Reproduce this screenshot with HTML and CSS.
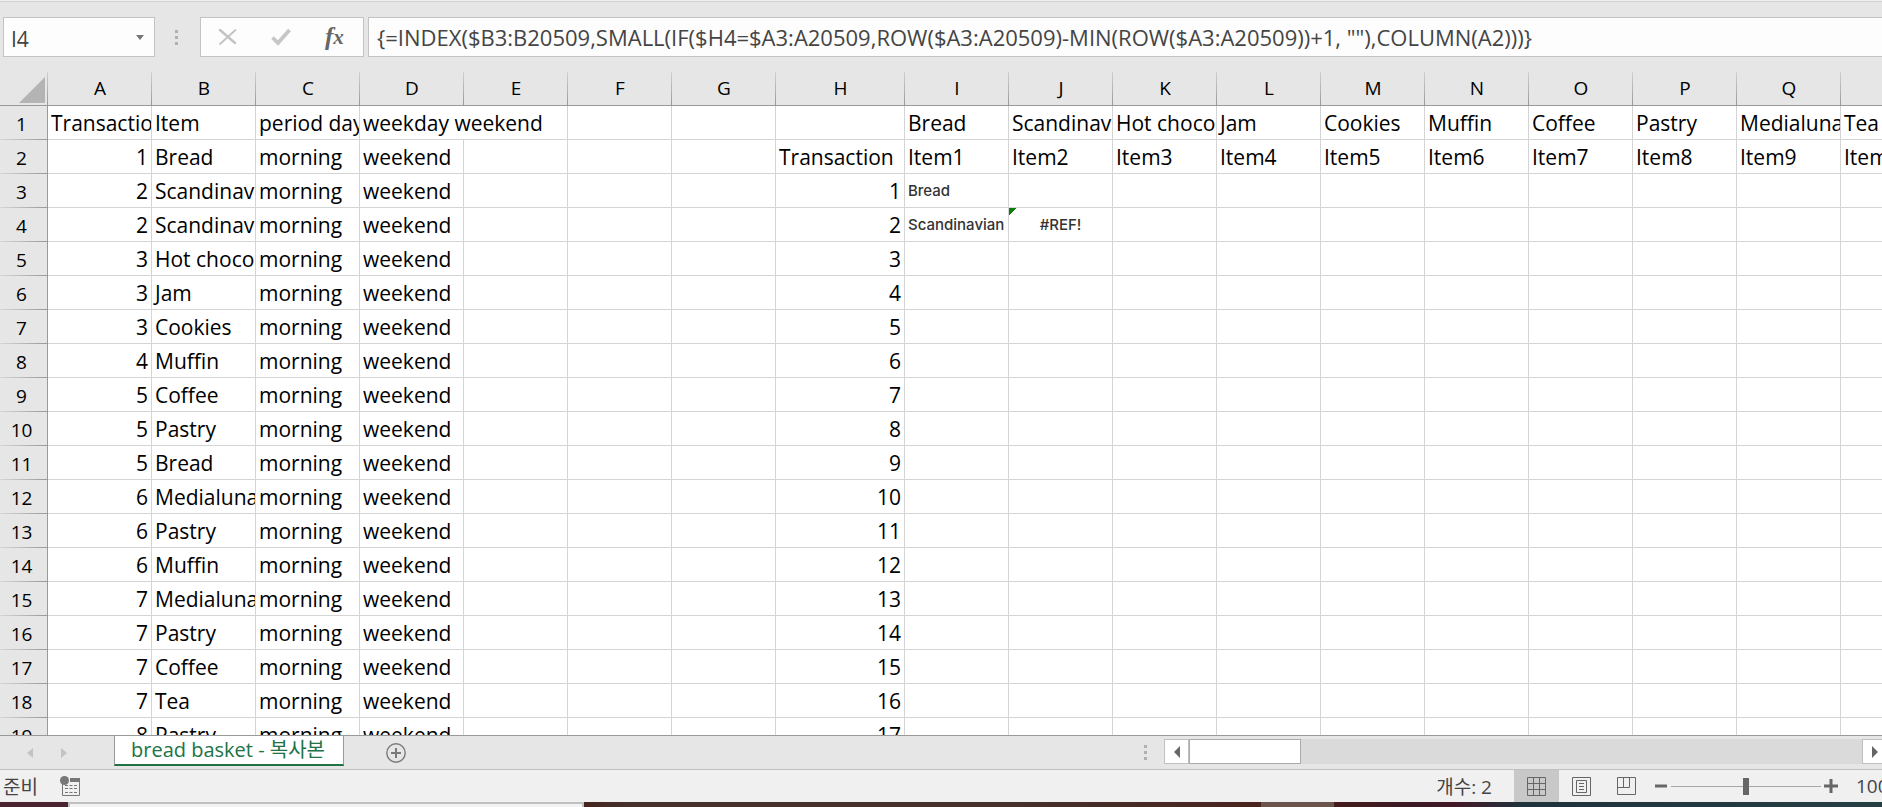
FILE: index.html
```html
<!DOCTYPE html>
<html lang="ko">

<head>
    <meta charset="UTF-8" />
    <meta name="viewport" content="width=device-width, initial-scale=1.0" />
    <title>bread basket - 복사본</title>
    <link rel="stylesheet" href="styles.css">
</head>

<body>
    <div class="formula-bar">
        <div class="name-box">
            <input type="text" value="I4" aria-label="Name box" />
            <button aria-label="Open name list">
                <svg width="8" height="5" viewBox="0 0 8 5"><path d="M0 0h8L4 5z" fill="#777" /></svg>
            </button>
        </div>
        <div class="dots"><span></span><span></span><span></span></div>
        <div class="formula-buttons">
            <button aria-label="Cancel">
                <svg width="20" height="18" viewBox="0 0 20 18" fill="none" stroke="#c3c3c3" stroke-linecap="round">
                    <path d="M2 2L17 15" stroke-width="2.4" />
                    <path d="M17.500 2L2 16" stroke-width="1.800" />
                </svg>
            </button>
            <button aria-label="Enter">
                <svg width="20" height="18" viewBox="0 0 20 18" fill="none" stroke="#c6c6c6">
                    <path d="M1.500 9.500L7 15L18.500 2" stroke-width="3.800" />
                </svg>
            </button>
            <button class="fx" aria-label="Insert function">f<span>x</span></button>
        </div>
        <input class="formula" type="text" aria-label="Formula"
            value="{=INDEX($B3:B20509,SMALL(IF($H4=$A3:A20509,ROW($A3:A20509)-MIN(ROW($A3:A20509))+1, &quot;&quot;),COLUMN(A2)))}" />
    </div>

    <div class="sheet">
        <table>
            <colgroup id="cols"></colgroup>
            <thead>
                <tr id="letters"></tr>
            </thead>
            <tbody id="rows"></tbody>
        </table>
    </div>

    <div class="tab-bar">
        <div class="tab-nav">
            <button aria-label="Previous sheet">
                <svg width="6" height="10" viewBox="0 0 6 10"><path d="M6 0v10L0 5z" fill="#c3c3c3" /></svg>
            </button>
            <button aria-label="Next sheet">
                <svg width="6" height="10" viewBox="0 0 6 10"><path d="M0 0v10l6-5z" fill="#c3c3c3" /></svg>
            </button>
        </div>
        <button class="tab">bread basket - 복사본</button>
        <button class="add-sheet" aria-label="New sheet">
            <svg width="20" height="20" viewBox="0 0 20 20" fill="none" stroke="#7a7a7a">
                <circle cx="10" cy="10" r="9.200" stroke-width="1.400" />
                <path d="M10 5v10M5 10h10" stroke-width="2" />
            </svg>
        </button>
        <div class="dots"><span></span><span></span><span></span></div>
        <div class="scrollbar">
            <button aria-label="Scroll left">
                <svg width="6" height="12" viewBox="0 0 6 12"><path d="M6 0v12L0 6z" fill="#666" /></svg>
            </button>
            <div class="scroll-thumb"></div>
            <button class="scroll-right" aria-label="Scroll right">
                <svg width="6" height="12" viewBox="0 0 6 12"><path d="M0 0v12l6-6z" fill="#666" /></svg>
            </button>
        </div>
    </div>

    <div class="status-bar">
        <span>준비</span>
        <button class="macro" aria-label="Record macro">
            <svg width="20" height="20" viewBox="0 0 20 20">
                <path d="M2.500 8v11.500h17V2" fill="none" stroke="#777" />
                <path d="M10 2h10v4H10z" fill="#777" />
                <circle cx="4.500" cy="4.500" r="4.500" fill="#777" />
                <path d="M5 9.500h12M5 12.500h12M5 16.500h12" stroke="#777" stroke-dasharray="3 1.500" />
            </svg>
        </button>
        <span class="count">개수: 2</span>
        <div class="views">
            <button class="active" aria-label="Normal view">
                <svg width="19" height="19" viewBox="0 0 19 19" fill="none" stroke="#666">
                    <path d="M.5.5h18v18H.5zM.5 6.500h18M.5 12.500h18M6.500.5v18M12.500.5v18" />
                </svg>
            </button>
            <button aria-label="Page layout">
                <svg width="19" height="19" viewBox="0 0 19 19" fill="none" stroke="#666">
                    <path d="M.5.5h18v18H.5zM4.500 3.500h10v12h-10zM7 6.500h5M7 9.500h5M7 12.500h5" />
                </svg>
            </button>
            <button aria-label="Page break preview">
                <svg width="19" height="19" viewBox="0 0 19 19" fill="none" stroke="#666">
                    <path d="M.5.5h18v17H.5zM.5 10.500h12V.5M6.500.5v10" />
                </svg>
            </button>
        </div>
        <button class="zoom-button" aria-label="Zoom out">
            <svg width="14" height="14" viewBox="0 0 14 14"><path d="M1 7h12" stroke="#666" stroke-width="3" /></svg>
        </button>
        <input class="zoom" type="range" min="10" max="190" value="100" aria-label="Zoom" />
        <button class="zoom-button" aria-label="Zoom in">
            <svg width="14" height="14" viewBox="0 0 14 14"><path d="M0 7h14M7 0v14" stroke="#666" stroke-width="3" /></svg>
        </button>
        <span class="percent">100%</span>
    </div>

    <div class="taskbar">
        <div class="taskbar-start"></div>
        <div class="taskbar-search"></div>
        <div class="taskbar-apps"></div>
        <div class="taskbar-current"></div>
        <div class="taskbar-tray"></div>
    </div>

    <script>
        const letters = "ABCDEFGHIJKLMNOPQR".split("");

        const orders = [
            [1, "Bread"], [2, "Scandinavian"], [2, "Scandinavian"], [3, "Hot chocolate"],
            [3, "Jam"], [3, "Cookies"], [4, "Muffin"], [5, "Coffee"], [5, "Pastry"],
            [5, "Bread"], [6, "Medialuna"], [6, "Pastry"], [6, "Muffin"], [7, "Medialuna"],
            [7, "Pastry"], [7, "Coffee"], [7, "Tea"], [8, "Pastry"]
        ];
        const items = ["Bread", "Scandinavian", "Hot chocolate", "Jam", "Cookies", "Muffin",
            "Coffee", "Pastry", "Medialuna", "Tea"];

        const cells = {
            A1: "Transaction", B1: "Item", C1: "period day", D1: "weekday weekend",
            H2: "Transaction", I3: "Bread", I4: "Scandinavian", J4: "#REF!"
        };

        orders.forEach(([id, item], i) => {
            const row = i + 2;
            cells["A" + row] = id;
            cells["B" + row] = item;
            cells["C" + row] = "morning";
            cells["D" + row] = "weekend";
            if (row > 2) cells["H" + row] = row - 2;
        });

        items.forEach((item, i) => {
            cells[letters[8 + i] + 1] = item;
            cells[letters[8 + i] + 2] = "Item" + (i + 1);
        });

        // cells with their own look
        const classes = { I3: "result", I4: "result", J4: "result error" };

        function renderSheet() {
            document.getElementById("cols").innerHTML = `<col class="col-head">` +
                letters.map(l => `<col class="${l === "H" ? "col-wide" : "col"}">`).join("");

            document.getElementById("letters").innerHTML =
                `<th class="corner"><svg width="26" height="26" viewBox="0 0 26 26"><path d="M26 0v26H0z" fill="#b4b4b4" /></svg></th>` +
                letters.map(l => `<th scope="col">${l}</th>`).join("");

            let html = "";
            for (let row = 1; row <= orders.length + 1; row++) {
                html += `<tr><th scope="row">${row}</th>`;
                letters.forEach(l => {
                    const key = l + row;
                    if (key === "E1") return; // D1 runs over it
                    const value = cells[key] ?? "";
                    const cls = classes[key] || (typeof value === "number" ? "number" : "");
                    html += `<td class="${cls}"${key === "D1" ? ' colspan="2"' : ""}>${value}</td>`;
                });
                html += "</tr>";
            }
            document.getElementById("rows").innerHTML = html;
        }

        renderSheet();
    </script>
</body>

</html>
```
FILE: styles.css
```css
* {
    box-sizing: border-box;
}

body {
    margin: 0;
    height: 100vh;
    display: flex;
    flex-direction: column;
    overflow: hidden;
    border-top: 1px solid #f0f0f0;
    background: #e6e6e6;
    color: #000;
    font-family: "Open Sans", "Noto Sans CJK KR", sans-serif;
    font-size: 21px;
}

button {
    display: flex;
    align-items: center;
    justify-content: center;
    margin: 0;
    padding: 0;
    border: none;
    background: none;
    font-family: inherit;
    cursor: pointer;
}

input {
    margin: 0;
    font-family: inherit;
}

/* Formula bar */
.formula-bar {
    flex: none;
    display: flex;
    height: 71px;
    padding: 15px 0 15px 3px;
    border-top: 1px solid #d2d2d2;
}

.name-box,
.formula-buttons {
    display: flex;
    height: 40px;
    border: 1px solid #c3c3c3;
    background: #fdfdfd;
}

.name-box {
    width: 152px;
}

.name-box input {
    flex: 1;
    min-width: 0;
    padding: 3px 0 0 7px;
    border: none;
    background: none;
    color: #444;
    font-size: 21px;
}

.name-box button {
    width: 28px;
}

.dots {
    display: flex;
    flex-direction: column;
    justify-content: center;
    gap: 3px;
}

.dots span {
    width: 3px;
    height: 3px;
    background: #b0b0b0;
}

.formula-bar .dots {
    width: 45px;
    height: 40px;
    padding-right: 2px;
    align-items: center;
}

.formula-buttons {
    width: 164px;
    padding: 0 2px 0 0;
}

.formula-buttons button {
    flex: 1;
}

.formula-buttons .fx {
    color: #666;
    font: italic bold 25px "Liberation Serif", serif;
}

.fx span {
    font-size: 21px;
}

.formula {
    flex: 1;
    height: 40px;
    margin-left: 4px;
    padding: 0 8px;
    border: 1px solid #c3c3c3;
    border-right: none;
    background: #fdfdfd;
    color: #444;
    font-size: 22px;
}

/* Sheet */
.sheet {
    flex: 1;
    min-height: 0;
    overflow: hidden;
    border-bottom: 1px solid #999;
    background: #fff;
}

table {
    width: 0;
    table-layout: fixed;
    border-collapse: separate;
    border-spacing: 0;
}

.col-head {
    width: 48px;
}

.col {
    width: 104px;
}

.col-wide {
    width: 129px;
}

th,
td {
    height: 34px;
    padding: 2px 3px 0;
    overflow: hidden;
    white-space: nowrap;
    line-height: 31px;
}

th {
    background-color: #e6e6e6;
    font-size: 19px;
    font-weight: normal;
    text-align: center;
}

thead th {
    padding: 0;
    border-bottom: 1px solid #999;
    background-image: linear-gradient(#d0d0d0, #999);
    background-position: right;
    background-repeat: no-repeat;
    background-size: 1px 100%;
    line-height: 33px;
}

tbody th {
    padding: 2px 4px 0 0;
    border-right: 1px solid #999;
    background-image: linear-gradient(90deg, #d6d6d6, #999);
    background-position: bottom;
    background-repeat: no-repeat;
    background-size: 100% 1px;
    line-height: 32px;
}

td {
    border-right: 1px solid #d4d4d4;
    border-bottom: 1px solid #d4d4d4;
    text-align: left;
}

.corner svg {
    display: block;
    margin: 2px 3px 0 auto;
}

.number {
    text-align: right;
}

.result {
    padding-top: 0;
    color: #333;
    font-family: Inter, sans-serif;
    font-size: 15px;
    font-weight: 500;
}

.error {
    background: linear-gradient(135deg, #0a800a 5px, transparent 5px) no-repeat;
    text-align: center;
}

/* Sheet tabs */
.tab-bar {
    flex: none;
    display: flex;
    height: 34px;
    border-bottom: 1px solid #c0c0c0;
    overflow: hidden;
}

.tab-nav {
    display: flex;
    width: 114px;
    padding-left: 13px;
}

.tab-nav button {
    width: 34px;
}

.tab {
    height: 30px;
    padding: 0 18px 0 16px;
    border: 1px solid #999;
    border-top: none;
    border-bottom: 2px solid #217346;
    background: #fff;
    color: #217346;
    font-size: 20px;
    line-height: 28px;
}

.add-sheet {
    width: 20px;
    margin-left: 42px;
}

.tab-bar .dots {
    width: 20px;
    margin-left: auto;
}

.scrollbar {
    display: flex;
    width: 718px;
    height: 25px;
    margin-top: 3px;
    background: #dadada;
}

.scrollbar button {
    flex: none;
    width: 25px;
    border: 1px solid #c0c0c0;
    background: #fff;
}

.scroll-thumb {
    width: 112px;
    border: 1px solid #aaa;
    background: #fff;
}

.scrollbar .scroll-right {
    margin-right: -5px;
    margin-left: auto;
}

/* Status bar */
.status-bar {
    flex: none;
    display: flex;
    align-items: center;
    height: 32px;
    padding-left: 3px;
    overflow: hidden;
    background: #f0f0f0;
    color: #444;
    font-size: 19px;
    white-space: nowrap;
}

.macro {
    margin-left: 22px;
}

.count {
    margin-left: auto;
}

.views {
    display: flex;
    align-self: stretch;
    margin-left: 22px;
}

.views button {
    width: 45px;
}

.views .active {
    background: #c8c8c8;
}

.zoom-button {
    width: 20px;
}

.views + .zoom-button {
    margin-left: 2px;
}

.zoom {
    width: 150px;
    height: 17px;
    appearance: none;
    background: linear-gradient(#a8a8a8, #a8a8a8) center / 100% 1px no-repeat;
}

.zoom::-webkit-slider-thumb {
    appearance: none;
    width: 6px;
    height: 17px;
    background: #666;
}

.percent {
    width: 46px;
    margin-right: -20px;
    margin-left: 15px;
}

/* Desktop taskbar under the window */
.taskbar {
    flex: none;
    display: flex;
    height: 5px;
    background: #45302a;
}

.taskbar-start {
    width: 68px;
    background: #4a2430;
}

.taskbar-search {
    width: 516px;
    border: 2px solid #c0c0c0;
    border-bottom: none;
    background: #f3f3f3;
}

.taskbar-apps {
    flex: 1;
    background: linear-gradient(90deg, #45241f, #45302a 6%, #45302a 65%, #4a241f);
}

.taskbar-current {
    width: 73px;
    background: #6b544c;
}

.taskbar-tray {
    width: 548px;
    background: linear-gradient(90deg, #451c1c, #3a1a26 15%, #441826 22%, #20323c 34%, #263f45);
}
```
